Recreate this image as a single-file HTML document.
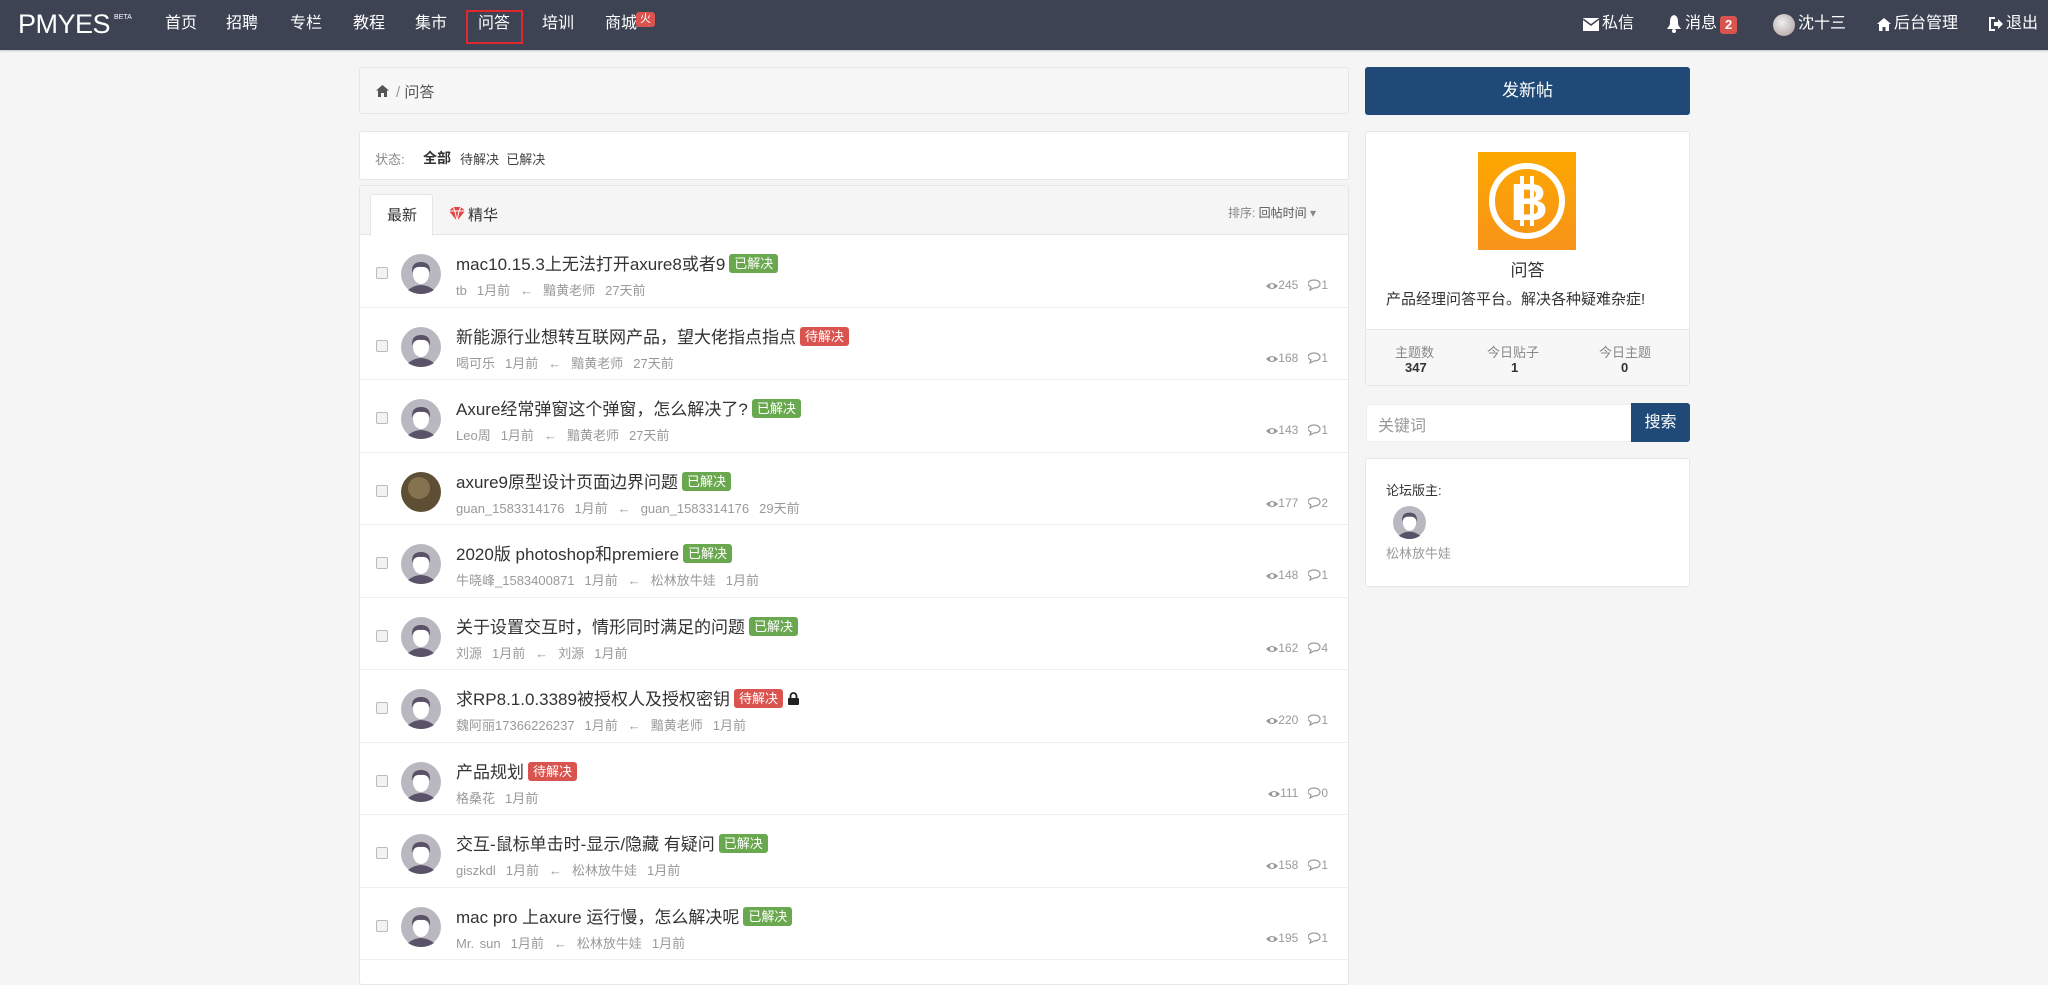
<!DOCTYPE html>
<html><head><meta charset="utf-8"><style>
*{box-sizing:border-box;margin:0;padding:0}
body{width:2048px;height:968px;overflow:hidden;background:#f5f5f5;font-family:"Liberation Sans","Noto Sans CJK SC",sans-serif;color:#333;position:relative}
.a{position:absolute;white-space:nowrap}
.nav{position:absolute;left:0;top:0;width:2048px;height:50px;background:#3e4354;box-shadow:0 1px 2px rgba(0,0,0,.2)}
.nav .i{position:absolute;top:13px;font-size:16px;color:#fff;line-height:22px}
.nav svg{position:absolute}
.box{position:absolute;background:#fff;border:1px solid #e6e6e6;border-radius:3px}
.lab{display:inline-block;color:#fff;font-size:13px;line-height:19px;padding:0 5px;border-radius:3px;vertical-align:2px;margin-left:4px}
.g{background:#6aa84f}.r{background:#d9534f}
.row{position:absolute;left:360px;width:988px;height:72.5px;border-bottom:1px solid #eee}
.row .cb{position:absolute;left:16px;top:32px;width:12px;height:12px;border:1px solid #bbb;border-radius:2px;background:#f3f3f3}
.row>svg{position:absolute;left:41px;top:19px}
.row .t{position:absolute;left:96px;top:15px;font-size:17px;color:#333;white-space:nowrap}
.row .m{position:absolute;left:96px;top:45px;font-size:13px;color:#999;white-space:nowrap;word-spacing:2px}
.row .m span{margin-right:10px}
.row .s{position:absolute;right:20px;top:43px;font-size:12px;color:#999;white-space:nowrap}
.s svg{vertical-align:-2px}
</style></head><body>
<svg width="0" height="0" style="position:absolute"><defs>
<g id="av"><circle cx="20" cy="20" r="20" fill="#b9b8c0"/><path d="M7 36 Q20 26 33 36 Q27 40 20 40 Q13 40 7 36Z" fill="#5a5268"/><ellipse cx="20" cy="20" rx="8" ry="10" fill="#fff"/><path d="M11 19 Q10 8 20 8 Q30 8 29 19 Q27 12 20 13 Q13 12 11 19Z" fill="#5a5268"/></g>
<g id="eye"><path d="M0 5 Q6 -1 12 5 Q6 11 0 5Z" fill="#999"/><circle cx="6" cy="5" r="2" fill="#fff"/></g>
<g id="cm"><path d="M6 1 C10 1 12 3 12 5 C12 7.5 9.5 9 6 9 L2 11 L3 8 C1 7 0 6 0 5 C0 3 2 1 6 1Z" fill="none" stroke="#999" stroke-width="1.2"/></g>
</defs></svg>
<div class="nav">
<div class="a" style="left:18px;top:9px;font-size:27px;color:#fff;letter-spacing:-0.5px">PMYES<sup style="font-size:7px;vertical-align:14px;margin-left:4px;letter-spacing:0">BETA</sup></div>
<div class="i" style="left:165px">首页</div>
<div class="i" style="left:226px">招聘</div>
<div class="i" style="left:290px">专栏</div>
<div class="i" style="left:353px">教程</div>
<div class="i" style="left:415px">集市</div>
<div class="a" style="left:466px;top:10px;width:57px;height:34px;border:2px solid #e0282e"></div>
<div class="i" style="left:478px">问答</div>
<div class="i" style="left:542px">培训</div>
<div class="i" style="left:605px">商城</div>
<div class="a" style="left:636px;top:12px;background:#d9534f;color:#fff;font-size:11px;line-height:15px;padding:0 4px;border-radius:3px">火</div>
<svg style="left:1583px;top:18px" width="16" height="13"><rect x="0" y="0" width="16" height="13" fill="#fff"/><path d="M0 1 L8 7 L16 1" fill="none" stroke="#3e4354" stroke-width="1.5"/></svg>
<div class="i" style="left:1602px">私信</div>
<svg style="left:1667px;top:15px" width="14" height="18"><path d="M7 0 C3 1 3 5 3 8 C3 11 1 12 0 14 L14 14 C13 12 11 11 11 8 C11 5 11 1 7 0Z" fill="#fff"/><circle cx="7" cy="16" r="2" fill="#fff"/></svg>
<div class="i" style="left:1685px">消息</div>
<div class="a" style="left:1720px;top:16px;background:#d9534f;color:#fff;font-size:13px;font-weight:bold;line-height:18px;padding:0 5px;border-radius:3px">2</div>
<div class="a" style="left:1773px;top:14px;width:22px;height:22px;border-radius:50%;background:radial-gradient(circle at 40% 40%,#eee,#a99)"></div>
<div class="i" style="left:1798px">沈十三</div>
<svg style="left:1877px;top:18px" width="14" height="13"><path d="M7 0 L14 6 L12 6 L12 13 L8.5 13 L8.5 9 L5.5 9 L5.5 13 L2 13 L2 6 L0 6Z" fill="#fff"/></svg>
<div class="i" style="left:1894px">后台管理</div>
<svg style="left:1989px;top:17px" width="14" height="14"><path d="M6 1 L1 1 L1 13 L6 13" fill="none" stroke="#fff" stroke-width="2"/><path d="M5 5 L9 5 L9 2 L14 7 L9 12 L9 9 L5 9Z" fill="#fff"/></svg>
<div class="i" style="left:2006px">退出</div>
</div>

<div class="box" style="left:359px;top:67px;width:990px;height:47px;background:#f7f7f8"></div>
<svg class="a" style="left:376px;top:85px" width="13" height="12"><path d="M6.5 0 L13 5.5 L11 5.5 L11 12 L8 12 L8 8 L5 8 L5 12 L2 12 L2 5.5 L0 5.5Z" fill="#555"/></svg>
<div class="a" style="left:396px;top:81px;font-size:15px;color:#555"><span style="color:#999">/</span> 问答</div>

<div class="box" style="left:359px;top:131px;width:990px;height:49px"></div>
<div class="a" style="left:375px;top:149px;font-size:13px;color:#888">状态:</div>
<div class="a" style="left:423px;top:148px;font-size:14px;color:#333;font-weight:bold">全部</div>
<div class="a" style="left:460px;top:149px;font-size:13px;color:#444">待解决 &nbsp;已解决</div>

<div class="box" style="left:359px;top:185px;width:990px;height:800px"></div>
<div class="a" style="left:360px;top:186px;width:988px;height:49px;background:#f5f5f5;border-bottom:1px solid #e6e6e6"></div>
<div class="a" style="left:370px;top:194px;width:63px;height:42px;background:#fff;border:1px solid #e6e6e6;border-bottom:none;border-radius:3px 3px 0 0"></div>
<div class="a" style="left:387px;top:204px;font-size:15px;color:#333">最新</div>
<svg class="a" style="left:449px;top:207px" width="16" height="14"><path d="M4 0 L12 0 L16 4 L8 14 L0 4Z" fill="#e04848"/><path d="M0 4 L16 4 M4 0 L6 4 L8 14 L10 4 L12 0" fill="none" stroke="#fff" stroke-width="1"/></svg>
<div class="a" style="left:468px;top:204px;font-size:15px;color:#333">精华</div>
<div class="a" style="left:1228px;top:204px;font-size:12px;color:#888">排序: <span style="color:#555">回帖时间</span> ▾</div>

<div class="row" style="top:235px"><div class="cb"></div><svg width="40" height="40"><use href="#av"/></svg><div class="t">mac10.15.3上无法打开axure8或者9<span class="lab g">已解决</span></div><div class="m"><span>tb</span><span>1月前</span><span>←</span><span>黯黄老师</span>27天前</div><div class="s"><svg width="12" height="10"><use href="#eye"/></svg>245 &nbsp; <svg width="13" height="12"><use href="#cm"/></svg>1</div></div>
<div class="row" style="top:307.5px"><div class="cb"></div><svg width="40" height="40"><use href="#av"/></svg><div class="t">新能源行业想转互联网产品，望大佬指点指点<span class="lab r">待解决</span></div><div class="m"><span>喝可乐</span><span>1月前</span><span>←</span><span>黯黄老师</span>27天前</div><div class="s"><svg width="12" height="10"><use href="#eye"/></svg>168 &nbsp; <svg width="13" height="12"><use href="#cm"/></svg>1</div></div>
<div class="row" style="top:380px"><div class="cb"></div><svg width="40" height="40"><use href="#av"/></svg><div class="t">Axure经常弹窗这个弹窗，怎么解决了?<span class="lab g">已解决</span></div><div class="m"><span>Leo周</span><span>1月前</span><span>←</span><span>黯黄老师</span>27天前</div><div class="s"><svg width="12" height="10"><use href="#eye"/></svg>143 &nbsp; <svg width="13" height="12"><use href="#cm"/></svg>1</div></div>
<div class="row" style="top:452.5px"><div class="cb"></div><svg width="40" height="40"><circle cx="20" cy="20" r="20" fill="#5e4e34"/><circle cx="18" cy="16" r="11" fill="#a08a60" opacity=".6"/></svg><div class="t">axure9原型设计页面边界问题<span class="lab g">已解决</span></div><div class="m"><span>guan_1583314176</span><span>1月前</span><span>←</span><span>guan_1583314176</span>29天前</div><div class="s"><svg width="12" height="10"><use href="#eye"/></svg>177 &nbsp; <svg width="13" height="12"><use href="#cm"/></svg>2</div></div>
<div class="row" style="top:525px"><div class="cb"></div><svg width="40" height="40"><use href="#av"/></svg><div class="t">2020版 photoshop和premiere<span class="lab g">已解决</span></div><div class="m"><span>牛晓峰_1583400871</span><span>1月前</span><span>←</span><span>松林放牛娃</span>1月前</div><div class="s"><svg width="12" height="10"><use href="#eye"/></svg>148 &nbsp; <svg width="13" height="12"><use href="#cm"/></svg>1</div></div>
<div class="row" style="top:597.5px"><div class="cb"></div><svg width="40" height="40"><use href="#av"/></svg><div class="t">关于设置交互时，情形同时满足的问题<span class="lab g">已解决</span></div><div class="m"><span>刘源</span><span>1月前</span><span>←</span><span>刘源</span>1月前</div><div class="s"><svg width="12" height="10"><use href="#eye"/></svg>162 &nbsp; <svg width="13" height="12"><use href="#cm"/></svg>4</div></div>
<div class="row" style="top:670px"><div class="cb"></div><svg width="40" height="40"><use href="#av"/></svg><div class="t">求RP8.1.0.3389被授权人及授权密钥<span class="lab r">待解决</span> <svg width="11" height="13" style="vertical-align:0"><path d="M2.5 6 L2.5 4 A3 3 0 0 1 8.5 4 L8.5 6" fill="none" stroke="#222" stroke-width="1.8"/><rect x="0" y="6" width="11" height="7" rx="1" fill="#222"/></svg></div><div class="m"><span>魏阿丽17366226237</span><span>1月前</span><span>←</span><span>黯黄老师</span>1月前</div><div class="s"><svg width="12" height="10"><use href="#eye"/></svg>220 &nbsp; <svg width="13" height="12"><use href="#cm"/></svg>1</div></div>
<div class="row" style="top:742.5px"><div class="cb"></div><svg width="40" height="40"><use href="#av"/></svg><div class="t">产品规划<span class="lab r">待解决</span></div><div class="m"><span>格桑花</span>1月前</div><div class="s"><svg width="12" height="10"><use href="#eye"/></svg>111 &nbsp; <svg width="13" height="12"><use href="#cm"/></svg>0</div></div>
<div class="row" style="top:815px"><div class="cb"></div><svg width="40" height="40"><use href="#av"/></svg><div class="t">交互-鼠标单击时-显示/隐藏 有疑问<span class="lab g">已解决</span></div><div class="m"><span>giszkdl</span><span>1月前</span><span>←</span><span>松林放牛娃</span>1月前</div><div class="s"><svg width="12" height="10"><use href="#eye"/></svg>158 &nbsp; <svg width="13" height="12"><use href="#cm"/></svg>1</div></div>
<div class="row" style="top:887.5px"><div class="cb"></div><svg width="40" height="40"><use href="#av"/></svg><div class="t">mac pro 上axure 运行慢，怎么解决呢<span class="lab g">已解决</span></div><div class="m"><span>Mr. sun</span><span>1月前</span><span>←</span><span>松林放牛娃</span>1月前</div><div class="s"><svg width="12" height="10"><use href="#eye"/></svg>195 &nbsp; <svg width="13" height="12"><use href="#cm"/></svg>1</div></div>

<div class="a" style="left:1365px;top:67px;width:325px;height:48px;background:#1f4a77;border-radius:3px;color:#fff;font-size:17px;text-align:center;line-height:48px">发新帖</div>
<div class="box" style="left:1365px;top:131px;width:325px;height:255px"></div>
<div class="a" style="left:1366px;top:329px;width:323px;height:56px;background:#f7f7f7;border-top:1px solid #e6e6e6"></div>
<svg class="a" style="left:1478px;top:152px" width="98" height="98"><defs><linearGradient id="bg" x1="0" y1="0" x2="0" y2="1"><stop offset="0" stop-color="#fda800"/><stop offset="1" stop-color="#f7931a"/></linearGradient></defs><rect width="98" height="98" fill="url(#bg)"/><circle cx="49" cy="49" r="35" fill="none" stroke="#fff" stroke-width="6"/><text x="51" y="68" text-anchor="middle" font-size="52" font-weight="bold" fill="#fff" font-family="Liberation Sans">B</text><rect x="42" y="24" width="4" height="50" fill="#fff"/><rect x="52" y="24" width="4" height="50" fill="#fff"/></svg>
<div class="a" style="left:1365px;top:256px;width:325px;text-align:center;font-size:17px;color:#333">问答</div>
<div class="a" style="left:1386px;top:288px;font-size:15px;color:#333">产品经理问答平台。解决各种疑难杂症!</div>
<div class="a" style="left:1395px;top:342px;font-size:13px;color:#888">主题数</div>
<div class="a" style="left:1405px;top:360px;font-size:13px;font-weight:bold;color:#333">347</div>
<div class="a" style="left:1487px;top:342px;font-size:13px;color:#888">今日贴子</div>
<div class="a" style="left:1511px;top:360px;font-size:13px;font-weight:bold;color:#333">1</div>
<div class="a" style="left:1599px;top:342px;font-size:13px;color:#888">今日主题</div>
<div class="a" style="left:1621px;top:360px;font-size:13px;font-weight:bold;color:#333">0</div>

<div class="a" style="left:1366px;top:404px;width:266px;height:38px;background:#fff;border-radius:3px 0 0 3px;border:1px solid #eee"></div>
<div class="a" style="left:1378px;top:412px;font-size:16px;color:#999">关键词</div>
<div class="a" style="left:1631px;top:403px;width:59px;height:39px;background:#1f4a77;border-radius:0 3px 3px 0;color:#fff;font-size:16px;text-align:center;line-height:39px">搜索</div>

<div class="box" style="left:1365px;top:458px;width:325px;height:129px"></div>
<div class="a" style="left:1386px;top:480px;font-size:13px;color:#333">论坛版主:</div>
<svg class="a" style="left:1393px;top:506px" width="33" height="33" viewBox="0 0 40 40"><use href="#av"/></svg>
<div class="a" style="left:1386px;top:543px;font-size:13px;color:#999">松林放牛娃</div>
</body></html>
